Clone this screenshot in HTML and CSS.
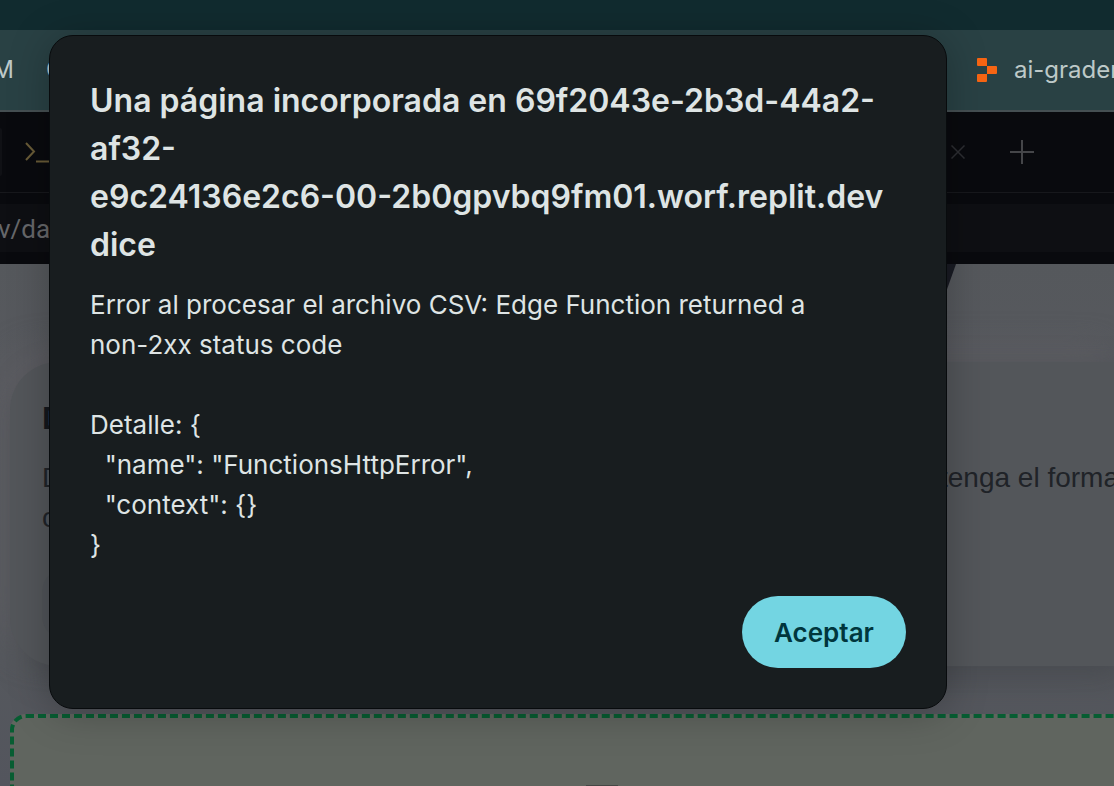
FILE: index.html
```html
<!DOCTYPE html>
<html lang="es">
<head>
<meta charset="utf-8">
<meta name="viewport" content="width=device-width, initial-scale=1">
<title>Aviso</title>
<link rel="stylesheet" href="styles.css">
</head>
<body>
<div class="window">
  <div class="titlebar"></div>
  <nav class="bookmarks">
    <a class="bookmark bookmark-first" href="#">M</a>
    <a class="bookmark bookmark-second" href="#">C</a>
    <a class="bookmark bookmark-replit" href="#">
      <svg class="replit" viewBox="0 0 20 24" aria-hidden="true"><path d="M1 0H9Q10 0 10 1V8H1Q0 8 0 7V1Q0 0 1 0ZM10 8H19Q20 8 20 9V15Q20 16 19 16H10ZM1 16H10V23Q10 24 9 24H1Q0 24 0 23V17Q0 16 1 16Z" fill="#f76513"/></svg>
      <span>ai-grader</span>
    </a>
  </nav>
  <div class="tabs">
    <span class="tab-edge"></span>
    <svg class="prompt" viewBox="0 0 28 24" aria-hidden="true"><path d="M2 3l8 8.500L2 20M12 21.500h14" fill="none" stroke="#695b37" stroke-width="2"/></svg>
    <button class="icon-button tab-close" type="button" aria-label="Cerrar pestaña"><svg viewBox="0 0 14 14"><path d="M.5.500l13 13M13.500.500l-13 13" fill="none" stroke="#2d2e32" stroke-width="1.500"/></svg></button>
    <button class="icon-button tab-new" type="button" aria-label="Nueva pestaña"><svg viewBox="0 0 24 24"><path d="M12 0v24M0 12h24" fill="none" stroke="#454649" stroke-width="2"/></svg></button>
  </div>
  <div class="address"><div class="address-field">v/das</div></div>
  <main class="page">
    <svg class="slash" viewBox="0 0 16 48" aria-hidden="true"><path d="M0 0H16L0 45Z" fill="#191b23"/></svg>
    <section class="card">
      <h2 class="card-title">D</h2>
      <div class="card-line"><span>D</span><span class="card-tail">tenga el formato</span></div>
      <div class="card-line"><span>c</span></div>
      <div class="card-inset"></div>
    </section>
    <section class="dropzone"><div class="drop-icon"></div></section>
  </main>
</div>
<dialog class="alert" open aria-labelledby="alert-title">
  <h1 class="alert-title" id="alert-title">Una página incorporada en 69f2043e-2b3d-44a2-<br>af32-<br>e9c24136e2c6-00-2b0gpvbq9fm01.worf.replit.dev<br>dice</h1>
  <div class="alert-body">Error al procesar el archivo CSV: Edge Function returned a
non-2xx status code

Detalle: {
  "name": "FunctionsHttpError",
  "context": {}
}</div>
  <button class="accept" type="button">Aceptar</button>
</dialog>
</body>
</html>
```
FILE: styles.css
```css
* { box-sizing: border-box; }
body {
  margin: 0;
  height: 100vh;
  overflow: hidden;
  position: relative;
  background: #55585d;
  font-family: Inter, "Liberation Sans", sans-serif;
}
.window {
  display: flex;
  flex-direction: column;
  height: 100%;
  overflow: hidden;
}
.titlebar { flex: 0 0 30px; background: #112b2f; }
.bookmarks {
  flex: 0 0 82px;
  display: flex;
  align-items: center;
  background: #294144;
  border-bottom: 2px solid #454f52;
}
.bookmark {
  flex: none;
  color: #bdc9c8;
  font-size: 24px;
  line-height: 32px;
  text-decoration: none;
}
.bookmark-first {
  display: flex;
  justify-content: flex-end;
  width: 14px;
  overflow: hidden;
}
.bookmark-second { margin-left: 32px; }
.bookmark-replit {
  display: flex;
  align-items: center;
  gap: 17px;
  margin-left: auto;
  width: 137px;
  white-space: nowrap;
}
.replit { flex: none; width: 20px; height: 24px; }
.tabs {
  flex: 0 0 81px;
  display: flex;
  align-items: center;
  background: #090a0e;
  border-bottom: 1px solid #17181c;
}
.tab-edge {
  width: 2px;
  height: 48px;
  background: #101115;
  border-radius: 0 2px 2px 0;
}
.prompt { width: 28px; height: 24px; margin-left: 22px; }
.icon-button {
  display: flex;
  padding: 0;
  border: 0;
  background: none;
}
.tab-close { width: 14px; margin-left: auto; }
.tab-new { width: 24px; margin: 0 80px 0 45px; }
.icon-button svg { width: 100%; }
.address {
  flex: 0 0 71px;
  padding: 11px 0 12px;
  background: #090a0e;
}
.address-field {
  height: 48px;
  background: #0e0f13;
  color: #66676a;
  font: 26px/50px Roboto, sans-serif;
  text-indent: -2px;
}
.page {
  flex: 1;
  display: grid;
  grid-template-rows: 98px auto 1fr;
  min-height: 0;
  padding-left: 10px;
  background: linear-gradient(#55585c, #57595e 98px, #55585d 400px, #53555d);
  font-family: "Liberation Sans", Arial, sans-serif;
}
.slash { width: 16px; height: 48px; justify-self: end; margin-right: 158px; }
.card {
  grid-row: 2;
  height: 304px;
  padding: 36px 0 0 32px;
  border-radius: 48px 0 0 48px;
  background: #53565a;
  box-shadow: 12px 12px 32px #484b50, -12px -12px 32px #5e5e63;
  color: #202328;
  overflow: hidden;
}
.card-title {
  margin: 0 0 20px;
  color: #14171d;
  font-size: 32px;
  line-height: 40px;
}
.card-line {
  display: flex;
  justify-content: space-between;
  font-size: 28px;
  line-height: 40px;
}
.card-tail { width: 174px; white-space: nowrap; }
.card-inset {
  width: 50%;
  height: 72px;
  margin-top: 30px;
  border-radius: 24px;
  background: #505358;
}
.dropzone {
  grid-row: 3;
  display: flex;
  justify-content: center;
  align-items: flex-end;
  margin: 48px -80px -24px 0;
  padding-bottom: 20px;
  border: 4px dashed #075d32;
  border-radius: 16px;
  background: #60655f;
}
.drop-icon { width: 32px; height: 1px; background: #454745; }
.alert {
  position: absolute;
  top: 35px;
  left: 49px;
  right: 167px;
  display: flex;
  flex-direction: column;
  width: auto;
  height: fit-content;
  margin: 0;
  padding: 41px 40px 40px;
  border: 1px solid #080b0d;
  border-radius: 24px;
  background: #181d1f;
  box-shadow: 0 4px 40px rgba(0, 0, 0, .25);
  color: #dee4e4;
}
.alert-title {
  margin: 0 0 16px;
  font-size: 32px;
  font-weight: 600;
  line-height: 48px;
  white-space: nowrap;
}
.alert-body {
  margin-bottom: 31px;
  font-size: 26px;
  line-height: 40px;
  white-space: pre-wrap;
}
.accept {
  align-self: flex-end;
  width: 164px;
  height: 72px;
  padding: 2px 0 0;
  border: 0;
  border-radius: 36px;
  background: #73d5e2;
  color: #00363d;
  font: 600 26px/32px Inter, sans-serif;
}
```
